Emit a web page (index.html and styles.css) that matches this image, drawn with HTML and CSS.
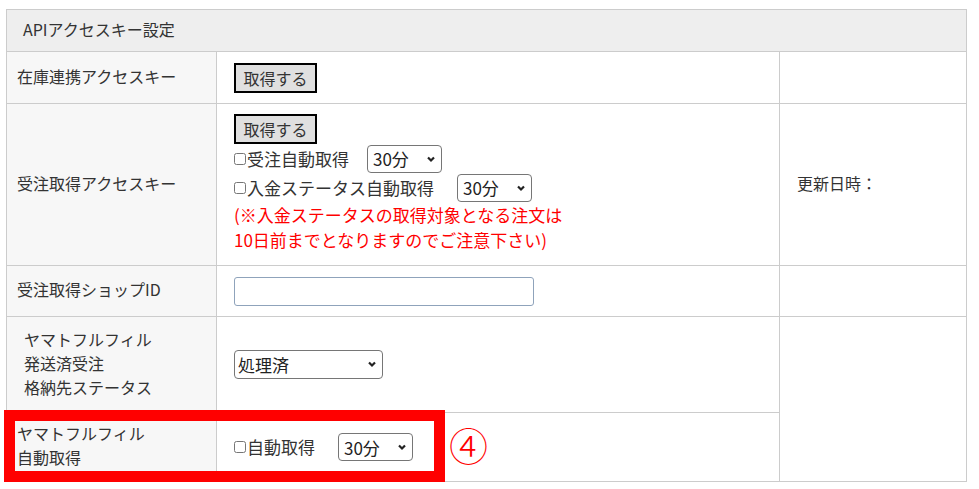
FILE: index.html
```html
<!DOCTYPE html>
<html>

<head>
    <title>APIアクセスキー設定</title>
    <link rel="stylesheet" href="styles.css">
</head>

<body>
    <div class="page">
        <table class="settings">
            <colgroup>
                <col class="col-label">
                <col class="col-field">
                <col class="col-side">
            </colgroup>
            <tr class="row-head">
                <th colspan="3" class="head">APIアクセスキー設定</th>
            </tr>
            <tr class="row-key">
                <td class="label">在庫連携アクセスキー</td>
                <td class="field"><button class="get-btn">取得する</button></td>
                <td class="side"></td>
            </tr>
            <tr class="row-order">
                <td class="label">受注取得アクセスキー</td>
                <td class="field">
                    <div><button class="get-btn">取得する</button></div>
                    <div class="line">
                        <label><input type="checkbox">受注自動取得</label>
                        <span class="pick gap-s">
                            <select>
                                <option>30分</option>
                            </select>
                            <svg viewBox="0 0 10 10"><path d="M2 3.5 L5 6.5 L8 3.5" /></svg>
                        </span>
                    </div>
                    <div class="line">
                        <label><input type="checkbox">入金ステータス自動取得</label>
                        <span class="pick gap-l">
                            <select>
                                <option>30分</option>
                            </select>
                            <svg viewBox="0 0 10 10"><path d="M2 3.5 L5 6.5 L8 3.5" /></svg>
                        </span>
                    </div>
                    <p class="note">(※入金ステータスの取得対象となる注文は<br>10日前までとなりますのでご注意下さい)</p>
                </td>
                <td class="side">更新日時：</td>
            </tr>
            <tr class="row-shop">
                <td class="label">受注取得ショップID</td>
                <td class="field"><input type="text" class="shop-id"></td>
                <td class="side"></td>
            </tr>
            <tr class="row-status">
                <td class="label indent">ヤマトフルフィル<br>発送済受注<br>格納先ステータス</td>
                <td class="field">
                    <span class="pick wide">
                        <select>
                            <option>処理済</option>
                        </select>
                        <svg viewBox="0 0 10 10"><path d="M2 3.5 L5 6.5 L8 3.5" /></svg>
                    </span>
                </td>
                <td class="side" rowspan="2"></td>
            </tr>
            <tr class="row-auto">
                <td class="label">ヤマトフルフィル<br>自動取得</td>
                <td class="field">
                    <div class="line">
                        <label><input type="checkbox">自動取得</label>
                        <span class="pick gap-l">
                            <select>
                                <option>30分</option>
                            </select>
                            <svg viewBox="0 0 10 10"><path d="M2 3.5 L5 6.5 L8 3.5" /></svg>
                        </span>
                    </div>
                </td>
            </tr>
        </table>

        <!-- annotation -->
        <div class="mark-box"></div>
        <div class="mark-num">④</div>
    </div>
</body>

</html>
```

FILE: styles.css
```css
body {
    margin: 0;
    font-family: "Noto Sans CJK JP", "Noto Sans", sans-serif;
    font-size: 16px;
    color: #333;
    background-color: #fff;
}

.page {
    position: relative;
    padding: 9px 0 0 6px;
}

.settings {
    border-collapse: collapse;
    width: 960px;
    table-layout: fixed;
}

.col-label {
    width: 210px;
}

.col-field {
    width: 563px;
}

.col-side {
    width: 187px;
}

.settings th,
.settings td {
    border: 1px solid #ccc;
    padding: 0 17px;
    vertical-align: middle;
    line-height: 24px;
}

/* text cells sit a little higher than the controls */
.head,
.label,
.side {
    padding-bottom: 4px !important;
}

.head {
    background-color: #eee;
    text-align: left;
    font-weight: normal;
    padding-left: 16px !important;
}

.label {
    background-color: #f7f7f7;
    padding-left: 10px !important;
    padding-right: 6px !important;
}

.label.indent {
    padding-left: 17px !important;
}

.row-head {
    height: 42px;
}

.row-key {
    height: 52px;
}

.row-order {
    height: 162px;
}

.row-shop {
    height: 51px;
}

.row-status {
    height: 96px;
}

.row-auto {
    height: 69px;
}

.get-btn {
    font-family: inherit;
    font-size: 16px;
    color: #333;
    background-color: #e0e0e0;
    border: 2px solid #000;
    border-radius: 0;
    width: 83px;
    height: 30px;
    padding: 0;
    line-height: 26px;
    margin: 0;
    display: block;
}

.row-order .get-btn {
    margin-top: -3px;
}

.line {
    display: flex;
    align-items: center;
    height: 29px;
    font-size: 17px;
    white-space: nowrap;
}

.line label {
    display: flex;
    align-items: center;
}

.line input[type="checkbox"] {
    width: 12px;
    height: 12px;
    margin: 0 1px 0 0;
}

.pick {
    position: relative;
    display: inline-block;
    height: 28px;
}

.pick select {
    appearance: none;
    -webkit-appearance: none;
    font-family: inherit;
    font-size: 17px;
    color: #222;
    width: 75px;
    height: 28px;
    padding: 0 0 0 5px;
    border: 1px solid #767676;
    border-radius: 4px;
    background-color: #fff;
    display: block;
}

.pick svg {
    position: absolute;
    right: 6px;
    top: 9px;
    width: 10px;
    height: 10px;
    pointer-events: none;
}

.pick svg path {
    fill: none;
    stroke: #222;
    stroke-width: 2.2;
}

.gap-s {
    margin-left: 18px;
}

.gap-l {
    margin-left: 23px;
}

.pick.wide {
    height: 29px;
}

.pick.wide select {
    width: 149px;
    height: 29px;
    padding-left: 3px;
}

.note {
    margin: 0;
    color: #f00;
    font-size: 17px;
    line-height: 25px;
    white-space: nowrap;
}

.shop-id {
    width: 300px;
    height: 29px;
    box-sizing: border-box;
    border: 1px solid #8fa3bb;
    border-radius: 3px;
    margin: 0;
    display: block;
}

.mark-box {
    position: absolute;
    left: 4px;
    top: 410px;
    width: 419px;
    height: 50px;
    border: 11px solid #f00;
}

.mark-num {
    position: absolute;
    left: 449px;
    top: 419px;
    font-size: 39px;
    font-weight: 300;
    line-height: 50px;
    color: #f00;
}
```
